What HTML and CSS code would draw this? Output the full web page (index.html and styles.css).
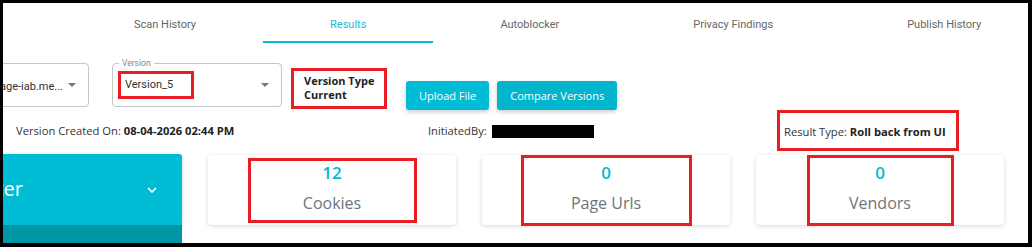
FILE: index.html
```html
<!DOCTYPE html>
<html lang="en">

<head>
    <meta charset="UTF-8">
    <meta name="viewport" content="width=device-width, initial-scale=1.0">
    <title>Scan Results</title>
    <link rel="stylesheet" href="styles.css">
</head>

<body>
    <div class="frame">
        <nav class="tabs">
            <a class="tab">Scan History</a>
            <a class="tab active">Results</a>
            <a class="tab">Autoblocker</a>
            <a class="tab">Privacy Findings</a>
            <a class="tab">Publish History</a>
        </nav>

        <div class="toolbar">
            <div class="select select-domain">
                <span class="select-value">www.homepage-iab.me...</span>
                <span class="caret"></span>
            </div>
            <div class="select select-version">
                <span class="select-label">Version</span>
                <span class="select-value"><span class="mark version-mark">Version_5</span></span>
                <span class="caret"></span>
            </div>
            <div class="mark version-type">Version Type<br>Current</div>
            <button class="btn">Upload File</button>
            <button class="btn btn-alt">Compare Versions</button>
        </div>

        <div class="meta">
            <div>Version Created On: <b>08-04-2026 02:44 PM</b></div>
            <div>InitiatedBy: <span class="redacted"></span></div>
            <div class="mark result-type">Result Type:&nbsp;<b>Roll back from UI</b></div>
        </div>

        <div class="cards">
            <div class="side">
                <div class="panel">
                    <span class="panel-title">Filter</span>
                    <svg class="chevron" width="10" height="6" viewBox="0 0 10 6">
                        <polyline points="1,1 5,5 9,1" fill="none" stroke="#fff" stroke-width="1.6" />
                    </svg>
                </div>
                <div class="panel-body"></div>
            </div>
            <div class="card">
                <div class="mark stat stat-cookies">
                    <span class="stat-num">12</span>
                    <span class="stat-label">Cookies</span>
                </div>
            </div>
            <div class="card">
                <div class="mark stat stat-urls">
                    <span class="stat-num">0</span>
                    <span class="stat-label">Page Urls</span>
                </div>
            </div>
            <div class="card">
                <div class="mark stat stat-vendors">
                    <span class="stat-num">0</span>
                    <span class="stat-label">Vendors</span>
                </div>
            </div>
        </div>
    </div>
</body>

</html>
```

FILE: styles.css
```css
body {
    margin: 0;
    background: #000;
    font-family: "Open Sans", sans-serif;
    color: #333;
}

.frame {
    margin: 3px 4px 4px 3px;
    height: 240px;
    background: #fff;
    overflow: hidden;
}

/* tabs */
.tabs {
    display: flex;
    height: 40px;
    padding-left: 64px;
}

.tab {
    display: flex;
    align-items: center;
    flex-shrink: 0;
    box-sizing: border-box;
    padding: 4px 67px 0;
    border-bottom: 2px solid transparent;
    font-family: Roboto, sans-serif;
    font-size: 11px;
    color: #666;
    white-space: nowrap;
}

.tab.active {
    color: #22b9d4;
    border-bottom-color: #00bcd4;
}

/* annotation boxes */
.mark {
    box-sizing: border-box;
    border: 3px solid #ea1d25;
}

/* selects + buttons */
.toolbar {
    display: flex;
    align-items: flex-start;
    margin: 20px 0 0 -84px;
}

.select {
    position: relative;
    display: flex;
    align-items: center;
    flex-shrink: 0;
    box-sizing: border-box;
    width: 170px;
    height: 44px;
    padding: 0 12px;
    border: 1px solid #c6c6c6;
    border-radius: 4px;
    font-family: Roboto, sans-serif;
    font-size: 11px;
    color: #333;
}

.select-value {
    flex: 1;
    min-width: 0;
    overflow: hidden;
    white-space: nowrap;
}

.select-domain .select-value {
    display: flex;
    justify-content: flex-end;
    padding-top: 3px;
}

.select-version {
    margin-left: 23px;
    padding-left: 5px;
}

.select-label {
    position: absolute;
    top: -6px;
    left: 6px;
    padding: 0 3px;
    background: #fff;
    font-size: 8.5px;
    line-height: 11px;
    color: #888;
}

.caret {
    width: 0;
    height: 0;
    margin-left: 5px;
    border-left: 4px solid transparent;
    border-right: 4px solid transparent;
    border-top: 4px solid #777;
}

.version-mark {
    display: inline-block;
    height: 28px;
    padding: 0 18px 0 4px;
    line-height: 22px;
}

.version-type {
    flex-shrink: 0;
    width: 96px;
    height: 41px;
    margin: 5px 0 0 9px;
    padding: 3px 6px 0 10px;
    font-size: 11px;
    font-weight: bold;
    line-height: 14px;
    color: #222;
}

.btn {
    flex-shrink: 0;
    height: 29px;
    margin: 18px 0 0 8px;
    padding: 0 13px;
    border: none;
    border-radius: 3px;
    background: #00bcd4;
    color: #fff;
    font-family: "Open Sans", sans-serif;
    font-size: 11px;
    box-shadow: 0 2px 4px rgba(0, 0, 0, 0.2);
}

.toolbar .version-type + .btn {
    margin-left: 19px;
}

.btn-alt {
    background: #00b5cc;
}

/* meta line */
.meta {
    display: grid;
    grid-template-columns: 412px 349px auto;
    align-items: center;
    height: 41px;
    padding-left: 13px;
    font-size: 11.2px;
    color: #333;
}

.meta b {
    color: #222;
}

.redacted {
    display: inline-block;
    width: 102px;
    height: 13px;
    margin-left: 2px;
    background: #000;
    vertical-align: middle;
}

.result-type {
    justify-self: start;
    display: flex;
    align-items: center;
    height: 41px;
    padding: 2px 10px 0 4px;
}

/* cards */
.cards {
    display: grid;
    grid-template-columns: repeat(4, 248px);
    column-gap: 26px;
    align-items: start;
    margin: 3px 0 0 -69px;
}

.panel {
    display: flex;
    align-items: center;
    justify-content: space-between;
    height: 71px;
    padding: 0 25px 0 42px;
    background: #00bcd4;
    border-radius: 3px 3px 0 0;
    box-shadow: 0 1px 4px rgba(0, 0, 0, 0.18);
    color: #fff;
    font-size: 20px;
}

.panel-title {
    margin-top: -2px;
}

.panel-body {
    height: 40px;
    background: #0096a6;
}

.card {
    display: flex;
    align-items: center;
    justify-content: center;
    height: 70px;
    margin-top: 1px;
    background: #fff;
    border-radius: 4px;
    box-shadow: 0 1px 4px rgba(0, 0, 0, 0.16);
}

.stat {
    display: flex;
    flex-direction: column;
    align-items: center;
    justify-content: center;
    padding-bottom: 4px;
}

.stat-cookies {
    width: 169px;
    height: 65px;
}

.stat-urls {
    width: 171px;
    height: 71px;
}

.stat-vendors {
    width: 147px;
    height: 71px;
}

.stat-num {
    font-size: 17px;
    font-weight: 600;
    line-height: 22px;
    color: #00bcd4;
}

.stat-label {
    margin-top: 8px;
    font-size: 16px;
    line-height: 22px;
    color: #6d757c;
}
```
